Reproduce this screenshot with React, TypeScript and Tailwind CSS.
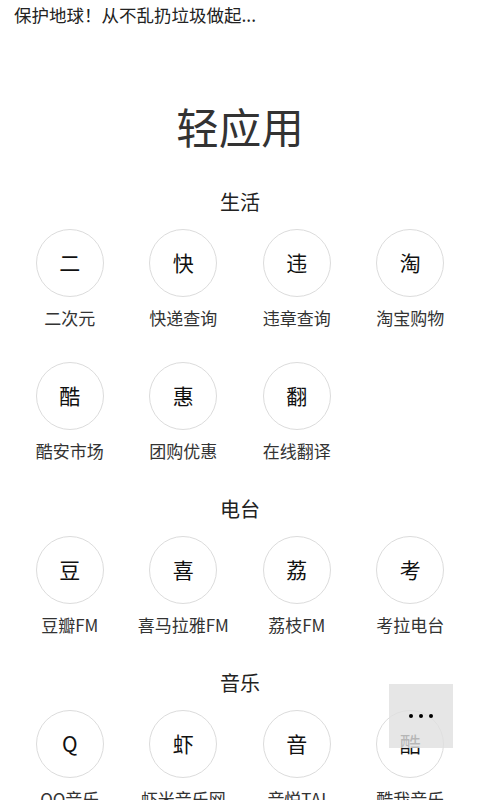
import React from "react";

type Sec = { title: string; items: [string, string][] };

const sections: Sec[] = [
  {
    title: "生活",
    items: [
      ["二", "二次元"],
      ["快", "快递查询"],
      ["违", "违章查询"],
      ["淘", "淘宝购物"],
      ["酷", "酷安市场"],
      ["惠", "团购优惠"],
      ["翻", "在线翻译"],
    ],
  },
  {
    title: "电台",
    items: [
      ["豆", "豆瓣FM"],
      ["喜", "喜马拉雅FM"],
      ["荔", "荔枝FM"],
      ["考", "考拉电台"],
    ],
  },
  {
    title: "音乐",
    items: [
      ["Q", "QQ音乐"],
      ["虾", "虾米音乐网"],
      ["音", "音悦TAI"],
      ["酷", "酷我音乐"],
    ],
  },
];

export default function App() {
  return (
    <div
      className="relative w-[480px] h-[800px] overflow-hidden bg-white text-[#333]"
      style={{ fontFamily: '"Noto Sans CJK SC", "Noto Sans", sans-serif' }}
    >
      <div className="pl-[14px] pt-[3px] h-[30px] text-[17.5px] leading-[24px] text-[#222]">
        保护地球！从不乱扔垃圾做起...
      </div>
      <div className="h-[158px] flex items-center justify-center pt-[62px]">
        <h1 className="text-[42.5px] leading-[50px] text-[#333] mb-[28px]">轻应用</h1>
      </div>
      {sections.map((s) => (
        <div key={s.title}>
          <div className="h-[28px] flex items-center justify-center text-[20px] text-[#222] mb-[13px]">
            {s.title}
          </div>
          <div className="grid grid-cols-4 px-[13px]">
            {s.items.map(([c, l], i) => (
              <div key={i} className="flex flex-col items-center pb-[33px]">
                <div className="w-[68px] h-[68px] rounded-full border border-[#dcdcdc] flex items-center justify-center text-[21px] text-[#111]">
                  {c}
                </div>
                <div className="mt-[10px] h-[22px] leading-[22px] text-[17px] text-[#333] whitespace-nowrap">
                  {l}
                </div>
              </div>
            ))}
          </div>
        </div>
      ))}
      <div className="absolute left-[389px] top-[684px] w-[64px] h-[64px] bg-[rgba(224,224,224,0.8)] flex items-center justify-center gap-[6px]">
        <span className="w-[4px] h-[4px] rounded-full bg-black" />
        <span className="w-[4px] h-[4px] rounded-full bg-black" />
        <span className="w-[4px] h-[4px] rounded-full bg-black" />
      </div>
    </div>
  );
}
